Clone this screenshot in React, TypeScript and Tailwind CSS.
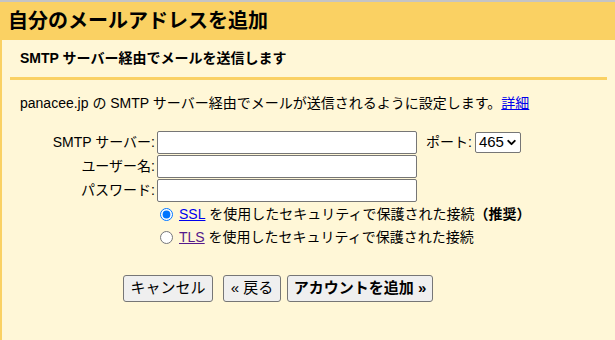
import { ChevronDown } from 'lucide-react';

const font = { fontFamily: '"Liberation Sans", "Noto Sans CJK JP", sans-serif' };

const Field = ({ label }: { label: string }) => (
  <div className="flex items-center h-[24px]">
    <label className="w-[155px] text-right pr-[2px] text-[14px]">{label}:</label>
    <input type="text" className="w-[260px] h-[23px] bg-white border border-[#767676] rounded-[2px]" />
  </div>
);

export default function App() {
  return (
    <div
      className="w-[615px] h-[340px] overflow-hidden bg-[#fff7d7] text-[#222] flex flex-col"
      style={font}
    >
      <div className="h-[2px] bg-[#c4c4c4]" />
      <div className="h-[38px] bg-[#fad163] flex items-center px-[8px] text-[20px] font-bold text-black">
        自分のメールアドレスを追加
      </div>

      <div className="flex-1 border-l-[2px] border-[#fad163]">
        <div className="h-[37px] flex items-end pl-[18px] pb-[8px] text-[14px] font-bold text-black">
          SMTP サーバー経由でメールを送信します
        </div>
        <div className="ml-[8px] w-[597px] h-[3px] bg-[#fad163]" />

        <div className="pl-[18px] pt-[13px] text-[14px] text-black">
          panacee.jp の SMTP サーバー経由でメールが送信されるように設定します。
          <a href="#" className="text-[#0000ee] underline">詳細</a>
        </div>

        <div className="mt-[16px] flex flex-col text-black">
          <div className="flex items-center">
            <Field label="SMTP サーバー" />
            <span className="ml-[9px] text-[14px]">ポート:</span>
            <div className="ml-[3px] h-[21px] w-[46px] bg-white border border-[#767676] rounded-[2px] flex items-center justify-between pl-[3px] pr-[2px] text-[15px]">
              465
              <ChevronDown size={13} strokeWidth={3.5} />
            </div>
          </div>
          <Field label="ユーザー名" />
          <Field label="パスワード" />
        </div>

        <div className="mt-[3px] pl-[158px] flex flex-col gap-[4px] text-[14px] text-black">
          <label className="flex items-center h-[19px]">
            <input type="radio" name="sec" defaultChecked className="m-0 mr-[6px] w-[13px] h-[13px]" />
            <a href="#" className="text-[#0000ee] underline">SSL</a>
            <span>&nbsp;を使用したセキュリティで保護された接続</span>
            <span className="font-bold">（推奨）</span>
          </label>
          <label className="flex items-center h-[19px]">
            <input type="radio" name="sec" className="m-0 mr-[6px] w-[13px] h-[13px]" />
            <a href="#" className="text-[#551a8b] underline">TLS</a>
            <span>&nbsp;を使用したセキュリティで保護された接続</span>
          </label>
        </div>

        <div className="mt-[28px] pl-[121px] flex items-center text-[15px] text-black">
          <button className="h-[27px] w-[90px] bg-[#efefef] border border-[#767676] rounded-[3px]">キャンセル</button>
          <button className="ml-[10px] h-[27px] w-[58px] bg-[#efefef] border border-[#767676] rounded-[3px]">« 戻る</button>
          <button className="ml-[6px] h-[27px] w-[146px] bg-[#efefef] border border-[#767676] rounded-[3px] font-bold">アカウントを追加 »</button>
        </div>
      </div>
    </div>
  );
}
